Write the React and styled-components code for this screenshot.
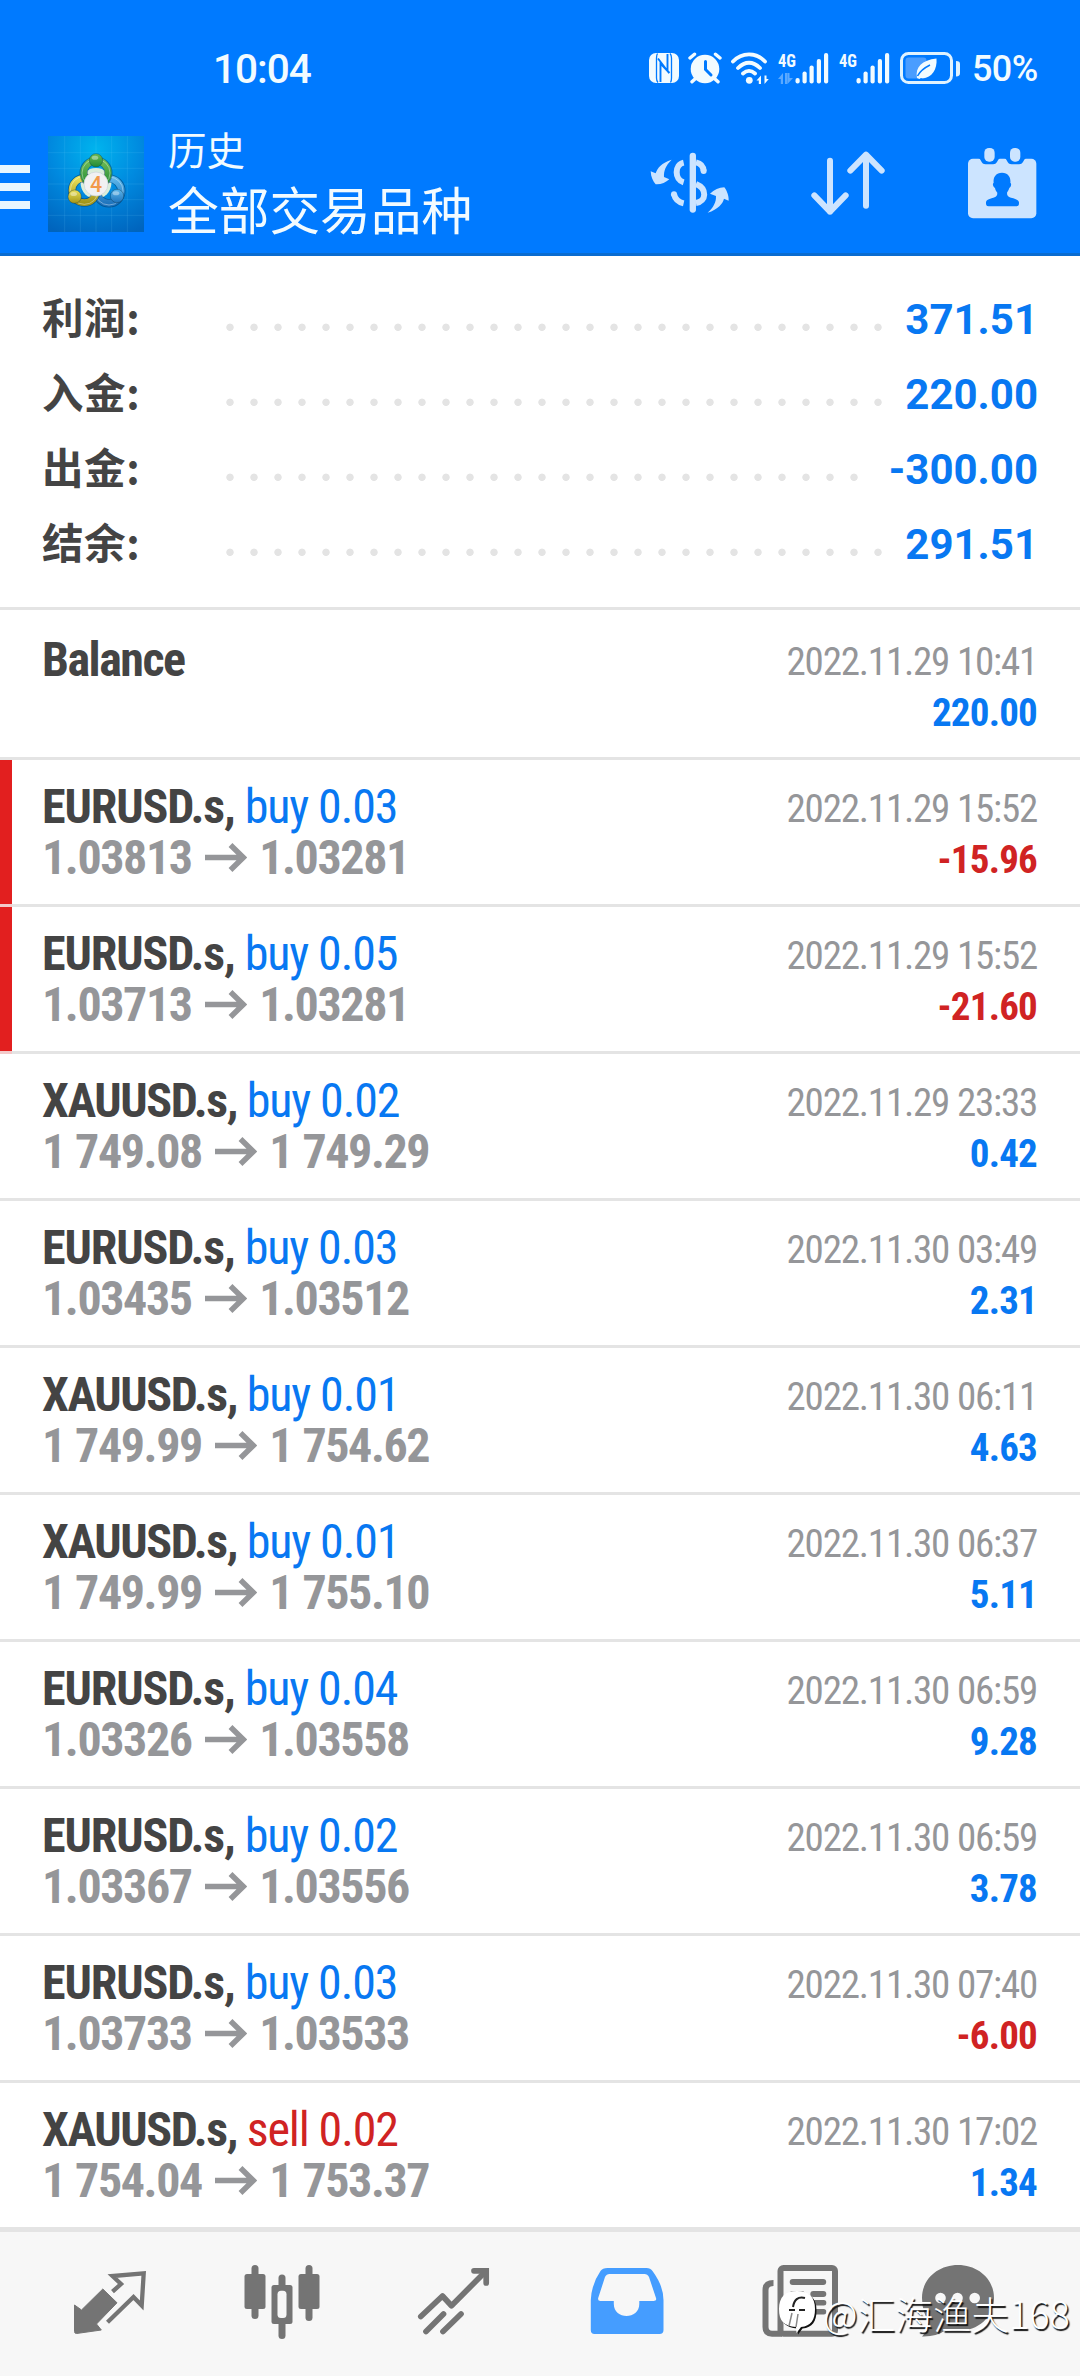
import React from 'react';
import styled, { createGlobalStyle } from 'styled-components';

const BLUE = '#007aff';
const VALUE_BLUE = '#0878f2';
const RED = '#d02323';
const PALE = '#cce4ff';
const GREY = '#747474';
const CJK = '"Noto Sans CJK SC", sans-serif';
const CONDENSED = '"Roboto Condensed", Roboto, sans-serif';

const Global = createGlobalStyle`
  * { box-sizing: border-box; }
  body { margin: 0; background: #fff; }
  svg { display: block; flex: none; }
`;

const Screen = styled.div`
  position: relative;
  width: 1080px;
  height: 2376px;
  display: flex;
  flex-direction: column;
  overflow: hidden;
  background: #fff;
  font-family: Roboto, sans-serif;
`;

/* ---------- header ---------- */

const Header = styled.header`
  height: 256px;
  flex: none;
  background: ${BLUE};
  border-bottom: 3px solid #0a6cd0;
  color: #f2fbff;
`;

const StatusBar = styled.div`
  height: 120px;
  padding: 16px 40px 0 213px;
  display: flex;
  align-items: center;
  justify-content: space-between;
`;

const Clock = styled.span`
  font-size: 40.5px;
  font-weight: 500;
  letter-spacing: -1px;
  line-height: 50px;
  padding-top: 1px;
`;

const StatusIcons = styled.div`
  display: flex;
  align-items: center;
  gap: 9px;
`;

const BatteryText = styled.span`
  margin-left: 2px;
  width: 68px;
  font-size: 36px;
  font-weight: 500;
  line-height: 44px;
  padding-top: 2px;
  letter-spacing: -0.6px;
  white-space: nowrap;
`;

const AppBar = styled.div`
  height: 133px;
  padding-right: 41px;
  display: flex;
  align-items: center;
`;

const MenuButton = styled.div`
  width: 30px;
  height: 44px;
  display: flex;
  flex-direction: column;
  justify-content: space-between;
`;

const MenuBar = styled.span`
  height: 8px;
  background: #e8f6ff;
`;

const LogoBox = styled.div`
  margin: 0 24px 5px 18px;
`;

const Titles = styled.div`
  flex: 1;
  height: 133px;
  font-family: ${CJK};
  white-space: nowrap;
`;

const Caption = styled.div`
  margin-top: 3px;
  font-size: 38.5px;
  line-height: 50px;
`;

const Title = styled.div`
  margin-top: 4.5px;
  font-size: 50.7px;
  line-height: 60px;
`;

const Actions = styled.div`
  padding-bottom: 7px;
  display: flex;
  align-items: center;
  gap: 77px;
`;

/* ---------- summary ---------- */

const Summary = styled.section`
  flex: none;
  padding: 26px 42px 25px;
  border-bottom: 3px solid #e4e4e4;
`;

const SummaryRow = styled.div`
  height: 75px;
  display: flex;
`;

const SummaryLabel = styled.span`
  width: 176px;
  font-family: ${CJK};
  font-weight: 700;
  font-size: 41.5px;
  letter-spacing: 0.6px;
  line-height: 69px;
  color: #444;
`;

const Leader = styled.span`
  flex: 1;
  background-image: radial-gradient(circle at 12px 45.3px, #e4e4e4 3.3px, transparent 4.1px);
  background-size: 24px 75px;
  background-repeat: repeat-x;
`;

const SummaryValue = styled.span`
  margin-left: 17px;
  font-weight: 700;
  font-size: 42px;
  line-height: 75px;
  color: ${VALUE_BLUE};
`;

/* ---------- deals ---------- */

const DealRow = styled.article`
  flex: none;
  display: flex;
  justify-content: space-between;
  height: ${p => (p.$first ? 150 : 147)}px;
  padding: ${p => (p.$first ? 24 : 21)}px 43px 0 42px;
  background:
    ${p => p.$marked && `
      linear-gradient(#f3caca, #f3caca) left bottom / 12px 3px no-repeat,
      linear-gradient(#e21f1f, #e21f1f) left top / 12px 144px no-repeat,
    `}
    linear-gradient(#e4e4e4, #e4e4e4) left bottom / 100% 3px no-repeat;
  font-family: ${CONDENSED};
  white-space: pre;
`;

const DealInfo = styled.div`
  font-size: 48px;
  line-height: 51px;
`;

const DealHead = styled.div`
  height: 51px;
`;

const tracking = { Balance: -1.5, 'EURUSD.s': -1.1, 'XAUUSD.s': -1.4 };

const Symbol = styled.span`
  font-weight: 700;
  color: #444;
  letter-spacing: ${p => p.$tracking}px;
`;

const Side = styled.span`
  color: ${p => (p.$sell ? RED : VALUE_BLUE)};
  letter-spacing: -1.1px;
`;

const Prices = styled.div`
  display: flex;
  font-weight: 700;
  letter-spacing: -1.4px;
  word-spacing: 0.5px;
  color: #959699;
`;

const ArrowBox = styled.span`
  padding: 11px 12px 0 13px;
`;

const DealMeta = styled.div`
  padding-top: 3px;
  text-align: right;
  font-size: 39px;
  line-height: 51px;
`;

const DealDate = styled.div`
  color: #959699;
  letter-spacing: -1.2px;
`;

const DealAmount = styled.div`
  font-weight: 700;
  letter-spacing: -0.8px;
  color: ${p => (p.$negative ? RED : VALUE_BLUE)};
`;

/* ---------- bottom navigation ---------- */

const Nav = styled.nav`
  flex: 1;
  display: flex;
  padding: 28px 0 0 23px;
  background: #f7f7f7;
  border-top: 2px solid #e4e4e4;
`;

const NavItem = styled.div`
  width: ${p => (p.$last ? 145 : 172.5)}px;
  display: flex;
  justify-content: center;
`;

const Watermark = styled.div`
  position: absolute;
  left: 779px;
  top: 2289px;
  display: flex;
  align-items: center;
  color: #fff;
  font-family: ${CJK};
  font-weight: 300;
  font-size: 37.9px;
  line-height: 48px;
  text-shadow: 1.5px 1.5px 1px #111;
  white-space: nowrap;
`;

const WatermarkText = styled.span`
  margin-left: 6px;
`;

/* ---------- drawings ---------- */

const Nfc = () => (
  <svg width="30" height="30" viewBox="0 0 30 30">
    <rect x="0" y="0" width="30" height="30" rx="7" fill="#f2fbff" />
    <path d="M8.500 0.500Q7.500 2 7.500 5V25Q7.500 28 9 29.500" fill="none" stroke={BLUE} strokeWidth="1.300" />
    <path d="M21.500 29.500Q22.500 28 22.500 25V5Q22.500 2 21 0.500" fill="none" stroke={BLUE} strokeWidth="1.300" />
    <path d="M11.500 29V10.500L20.500 20M18.500 1V18L9 5.500" fill="none" stroke={BLUE} strokeWidth="1.900" />
  </svg>
);

const Alarm = () => (
  <svg width="34" height="32" viewBox="0 0 34 32">
    <g stroke="#f2fbff" strokeWidth="3.4" strokeLinecap="round">
      <path d="M2 6L6.5 2.2M32 6L27.5 2.2M7 27L4 29.8M27 27L30 29.8" />
    </g>
    <circle cx="17" cy="17" r="14.3" fill="#f2fbff" />
    <path d="M17.5 9.5V17.5L23 23" fill="none" stroke={BLUE} strokeWidth="3" strokeLinecap="round" />
  </svg>
);

const Wifi = () => (
  <svg width="38" height="32" viewBox="0 0 38 32" fill="none" stroke="#f2fbff" strokeWidth="3.8" strokeLinecap="round">
    <path d="M2 9.5C11 0 25 0 34 9.5M7 16C14 9 22 9 29 16M12 21.5C16 18 20 18 24 21.5" />
    <circle cx="18.3" cy="28.3" r="3.4" fill="#f2fbff" stroke="none" />
    <path d="M25.500 28.500L30 23.500V32H27.800V28.500ZM37.800 27L33.500 32V23.500H35.500V27Z" fill="#f2fbff" stroke="none" />
  </svg>
);

const Signal = ({ data }) => (
  <svg width="52" height="32" viewBox="0 0 52 32" fill="#f2fbff" overflow="visible">
    <text x="0" y="15" fontFamily="Roboto Condensed, sans-serif" fontWeight="700" fontSize="19" textLength="18" lengthAdjust="spacingAndGlyphs">4G</text>
    <g>
      <rect x="17.5" y="26" width="4.2" height="5.5" rx="2" />
      <rect x="24.5" y="19.5" width="4.2" height="12" rx="2" />
      <rect x="31.5" y="13.5" width="4.2" height="18" rx="2" />
      <rect x="38.8" y="7" width="4.2" height="24.5" rx="2" />
      <rect x="46" y="1" width="4.2" height="30.5" rx="2" />
    </g>
    {data && <path d="M0 27L5 21V32H2.8V27ZM7 21V32H9.2V21ZM9.5 32V21H11.5V26H15Z" fill="#5aa9ff" />}
  </svg>
);

const Battery = () => (
  <svg width="61" height="33" viewBox="0 0 61 33">
    <rect x="1.5" y="1.5" width="50" height="29" rx="7" fill="none" stroke="#e0f3ff" strokeWidth="3" />
    <rect x="5.5" y="5.5" width="21" height="21" rx="3" fill="#4a9dff" />
    <path d="M56 9C59 9 60 10 60 12V21C60 23 59 24.500 56 24.500Z" fill="#e0f3ff" />
    <path d="M17 26C15 15 22 8 36.500 6.500C37.500 18 31 27.500 20.500 26L19.500 27Z" fill="#f2fbff" />
    <path d="M17.500 24C20 19 24 16 30 13" fill="none" stroke={BLUE} strokeWidth="1.500" />
  </svg>
);

const Person = ({ x, y, hx, hy, id }) => (
  <g fill="none">
    <circle cx={x} cy={y} r="37" stroke="rgba(0,40,80,.45)" strokeWidth="25" />
    <circle cx={x} cy={y} r="37" stroke={`url(#${id})`} strokeWidth="20" />
    <circle cx={x} cy={y} r="42" stroke="rgba(255,255,255,.45)" strokeWidth="2.5" />
    <circle cx={hx} cy={hy} r="20" fill={`url(#${id})`} stroke="rgba(0,40,60,.4)" strokeWidth="2.5" />
    <ellipse cx={hx - 3} cy={hy - 8} rx="10" ry="6" fill="rgba(255,255,255,.4)" />
  </g>
);

const AppLogo = () => (
  <svg width="96" height="96" viewBox="24 18 288 288">
    <defs>
      <radialGradient id="bg" cx="50%" cy="14%" r="95%">
        <stop offset="0" stopColor="#00b4ee" />
        <stop offset=".5" stopColor="#0089df" />
        <stop offset="1" stopColor="#0064bd" />
      </radialGradient>
      <linearGradient id="gr" x1="0" y1="0" x2="0" y2="1">
        <stop offset="0" stopColor="#6fbb55" />
        <stop offset="1" stopColor="#1f8a35" />
      </linearGradient>
      <linearGradient id="ye" x1="0" y1="0" x2="0" y2="1">
        <stop offset="0" stopColor="#e9e058" />
        <stop offset="1" stopColor="#a39518" />
      </linearGradient>
      <linearGradient id="bl" x1="0" y1="0" x2="0" y2="1">
        <stop offset="0" stopColor="#5cb6ea" />
        <stop offset="1" stopColor="#1f74bd" />
      </linearGradient>
    </defs>
    <rect x="24" y="18" width="288" height="288" fill="url(#bg)" />
    <path
      d="M74 18V306M121 18V306M168 18V306M215 18V306M262 18V306M24 68H312M24 115H312M24 162H312M24 209H312M24 256H312"
      stroke="rgba(120,215,255,.2)" strokeWidth="2"
    />
    <circle cx="168" cy="160" r="46" fill="#dbeeda" />
    <Person id="bl" x={207} y={183} hx={231} hy={198} />
    <Person id="ye" x={133} y={181} hx={104} hy={200} />
    <Person id="gr" x={168} y={129} hx={168} hy={91} />
    <circle cx="168" cy="162" r="36" fill="#f1f1f2" stroke="#c9d2d6" strokeWidth="2" />
    <text x="168" y="185" textAnchor="middle" fontFamily="Roboto, sans-serif" fontWeight="500" fontSize="64" fill="#f2994a">4</text>
  </svg>
);

const Exchange = () => (
  <svg width="83.3" height="68" viewBox="85 55 250 204" fill={PALE}>
    <rect x="210" y="66" width="19" height="180" rx="9.500" />
    <g fill="none" stroke={PALE} strokeWidth="18">
      <path d="M192 96C164 102 164 147 192 155" />
      <path d="M192 218C174 214 166 205 163 190" />
      <path d="M229 95C243 98 251 106 252 121" />
      <path d="M229 160C263 174 261 212 229 217" />
    </g>
    <circle cx="163" cy="191" r="9" />
    <circle cx="252" cy="121" r="9" />
    <path d="M156 87C126 96 113 112 108 128L93 122C94 140 100 152 108 161C124 162 138 156 149 146L133 139C132 120 138 105 156 87Z" />
    <path d="M264 246C296 236 310 218 313 204L327 210C328 196 322 180 314 170C298 170 284 178 271 189L289 196C290 214 282 230 264 246Z" />
  </svg>
);

const SortArrows = () => (
  <svg width="80" height="68" viewBox="558 58 240 204" fill="none" stroke={PALE} strokeWidth="18" strokeLinecap="round" strokeLinejoin="round">
    <path d="M624 93V246M577 197L624 246L671 197M732 228V75M685 123L732 75L779 123" />
  </svg>
);

const Calendar = () => (
  <svg width="74" height="74" viewBox="1034 47 222 222" fill={PALE}>
    <rect x="1043" y="85" width="205" height="179" rx="15" />
    <path d="M1074 83H1140C1130 86 1133 102 1118 102H1096C1081 102 1084 86 1074 83ZM1152 83H1218C1208 86 1211 102 1196 102H1174C1159 102 1162 86 1152 83Z" fill={BLUE} />
    <rect x="1092" y="53" width="31" height="41" rx="14" />
    <rect x="1169" y="53" width="31" height="41" rx="14" />
    <path d="M1145 127C1165 127 1172 143 1170 157C1174 159 1173 169 1167 173C1165 180 1162 184 1160 187C1160 196 1163 199 1172 202C1188 206 1197 209 1196 219C1196 225 1194 228 1188 228H1105C1099 228 1097 225 1097 219C1096 209 1104 206 1119 202C1128 199 1131 196 1131 187C1128 184 1125 180 1124 173C1117 169 1116 159 1120 157C1118 143 1125 127 1145 127Z" fill={BLUE} />
  </svg>
);

const PriceArrow = () => (
  <svg width="42.500" height="29" viewBox="0 0 42.5 29" fill="none" stroke="#959699" strokeWidth="5.500">
    <path d="M0 14.500H38M25.500 2L38.300 14.500L25.500 27" />
  </svg>
);

const NavSvg = ({ x, children }) => (
  <svg width="80" height="80" viewBox={`${x} 2260 80 80`}>{children}</svg>
);

const Quotes = () => (
  <NavSvg x={69}>
    <path d="M74.500 2305L81.500 2310L102.800 2289L117 2302.800L96.500 2324L101.300 2330L76.500 2333.500Q74.500 2333.500 74.500 2331.500Z" fill={GREY} stroke={GREY} strokeWidth="1" strokeLinejoin="round" />
    <path d="M112.500 2291.700L121 2284L112.500 2276L143.700 2273.300L141.700 2305.500L133.500 2297L107.500 2322.300" fill="none" stroke={GREY} strokeWidth="4.300" />
  </NavSvg>
);

const Candles = () => (
  <NavSvg x={241.5}>
    <g fill={GREY}>
      <rect x="244" y="2274" width="21" height="35" rx="2.500" />
      <rect x="251" y="2265" width="7" height="54" rx="3.500" />
      <rect x="298" y="2274" width="21" height="35" rx="2.500" />
      <rect x="305" y="2265" width="7" height="56" rx="3.500" />
      <rect x="278" y="2274.500" width="7" height="64.500" rx="3.500" />
      <rect x="271" y="2285" width="21" height="39" rx="2.500" />
    </g>
    <rect x="277" y="2290.700" width="9" height="27.300" rx="3.500" fill="#f7f7f7" />
  </NavSvg>
);

const Trade = () => (
  <NavSvg x={414}>
    <g fill="none" stroke={GREY} strokeWidth="5.700" strokeLinecap="round">
      <path d="M420.800 2316.500L442.500 2296L451.500 2305.700L486 2271" strokeLinejoin="round" />
      <path d="M474 2270.800H486.200V2283" />
      <path d="M426 2331.500L443.500 2314M443 2331.500L461 2314" />
    </g>
  </NavSvg>
);

const History = () => (
  <NavSvg x={586.5}>
    <path
      fillRule="evenodd"
      fill="#459dff"
      d="M607 2268H646Q650 2268 652 2271Q663 2286 663 2300V2330Q663 2334 659 2334H594Q590.300 2334 590.300 2330V2300Q591 2284 600 2271Q602 2268 607 2268ZM609 2274Q606 2274 604.500 2277L597.700 2298Q597 2301 600 2301H613.300V2304C613.300 2320 638.800 2320 638.800 2304V2301H653Q656.500 2301 655.500 2298L648.500 2277Q647 2274 644 2274Z"
    />
  </NavSvg>
);

const News = () => (
  <NavSvg x={759}>
    <g fill="none" stroke={GREY} strokeWidth="6">
      <rect x="780.500" y="2268" width="54.500" height="65.700" rx="3" />
      <path d="M773.500 2283Q765.500 2283 765.500 2290V2327Q765.500 2333.700 772 2333.700H782" />
    </g>
    <g fill={GREY}>
      <rect x="789.700" y="2279" width="36.500" height="6" rx="3" />
      <rect x="789.700" y="2291" width="15" height="6" rx="3" />
      <rect x="810.300" y="2291" width="16" height="6" rx="3" />
      <rect x="789.700" y="2300" width="15" height="5.500" rx="2.500" />
      <rect x="810.300" y="2300" width="16" height="5.500" rx="2.500" />
      <rect x="789.700" y="2309" width="36.500" height="5.500" rx="2.500" />
    </g>
  </NavSvg>
);

const Chat = () => (
  <NavSvg x={918}>
    <path d="M958 2265C978 2265 994 2279 994 2298C994 2317 978 2331 958 2331Q951 2331 946 2330Q936 2337 922 2336.500Q929 2330 929 2322Q922 2312 922 2298C922 2279 938 2265 958 2265Z" fill={GREY} />
    <g fill="#f7f7f7">
      <circle cx="940.500" cy="2298" r="5.300" />
      <circle cx="957.500" cy="2298" r="5.300" />
      <circle cx="974.700" cy="2298" r="5.300" />
    </g>
  </NavSvg>
);

const BadgeShape = 'M18 1C30 1 36 7 36 19C36 30 32 36 22 37L17.500 43L17 37C5 36 0 31 0 19C0 7 6 1 18 1Z';

const WatermarkLogo = () => (
  <svg width="38" height="46" viewBox="0 0 38 46">
    <path d={BadgeShape} transform="translate(1.500 1.500)" fill="#111" />
    <path d={BadgeShape} fill="#fff" />
    <path d="M26 8C19 6 15 10 14 17M10 20H16M20 20H26" fill="none" stroke="#222" strokeWidth="2" />
    <path d="M13 23L10 36M19 24L17 37" fill="none" stroke="#888" strokeWidth="1.500" />
  </svg>
);

/* ---------- data ---------- */

const totals = [
  ['利润:', '371.51'],
  ['入金:', '220.00'],
  ['出金:', '-300.00'],
  ['结余:', '291.51'],
];

const deals = [
  { symbol: 'Balance', date: '2022.11.29 10:41', amount: '220.00' },
  { symbol: 'EURUSD.s', side: 'buy 0.03', from: '1.03813', to: '1.03281', date: '2022.11.29 15:52', amount: '-15.96', marked: true },
  { symbol: 'EURUSD.s', side: 'buy 0.05', from: '1.03713', to: '1.03281', date: '2022.11.29 15:52', amount: '-21.60', marked: true },
  { symbol: 'XAUUSD.s', side: 'buy 0.02', from: '1 749.08', to: '1 749.29', date: '2022.11.29 23:33', amount: '0.42' },
  { symbol: 'EURUSD.s', side: 'buy 0.03', from: '1.03435', to: '1.03512', date: '2022.11.30 03:49', amount: '2.31' },
  { symbol: 'XAUUSD.s', side: 'buy 0.01', from: '1 749.99', to: '1 754.62', date: '2022.11.30 06:11', amount: '4.63' },
  { symbol: 'XAUUSD.s', side: 'buy 0.01', from: '1 749.99', to: '1 755.10', date: '2022.11.30 06:37', amount: '5.11' },
  { symbol: 'EURUSD.s', side: 'buy 0.04', from: '1.03326', to: '1.03558', date: '2022.11.30 06:59', amount: '9.28' },
  { symbol: 'EURUSD.s', side: 'buy 0.02', from: '1.03367', to: '1.03556', date: '2022.11.30 06:59', amount: '3.78' },
  { symbol: 'EURUSD.s', side: 'buy 0.03', from: '1.03733', to: '1.03533', date: '2022.11.30 07:40', amount: '-6.00' },
  { symbol: 'XAUUSD.s', side: 'sell 0.02', from: '1 754.04', to: '1 753.37', date: '2022.11.30 17:02', amount: '1.34' },
];

const navIcons = [Quotes, Candles, Trade, History, News, Chat];

function Deal({ deal, first }) {
  return (
    <DealRow $first={first} $marked={deal.marked}>
      <DealInfo>
        <DealHead>
          <Symbol $tracking={tracking[deal.symbol]}>{deal.side ? `${deal.symbol}, ` : deal.symbol}</Symbol>
          {deal.side && <Side $sell={deal.side.startsWith('sell')}>{deal.side}</Side>}
        </DealHead>
        {deal.from && (
          <Prices>
            <span>{deal.from}</span>
            <ArrowBox><PriceArrow /></ArrowBox>
            <span>{deal.to}</span>
          </Prices>
        )}
      </DealInfo>
      <DealMeta>
        <DealDate>{deal.date}</DealDate>
        <DealAmount $negative={deal.amount.startsWith('-')}>{deal.amount}</DealAmount>
      </DealMeta>
    </DealRow>
  );
}

export default function App() {
  return (
    <Screen>
      <Global />
      <Header>
        <StatusBar>
          <Clock>10:04</Clock>
          <StatusIcons>
            <Nfc />
            <Alarm />
            <Wifi />
            <Signal data />
            <Signal />
            <Battery />
            <BatteryText>50%</BatteryText>
          </StatusIcons>
        </StatusBar>
        <AppBar>
          <MenuButton><MenuBar /><MenuBar /><MenuBar /></MenuButton>
          <LogoBox><AppLogo /></LogoBox>
          <Titles>
            <Caption>历史</Caption>
            <Title>全部交易品种</Title>
          </Titles>
          <Actions>
            <Exchange />
            <SortArrows />
            <Calendar />
          </Actions>
        </AppBar>
      </Header>
      <Summary>
        {totals.map(([label, value]) => (
          <SummaryRow key={label}>
            <SummaryLabel>{label}</SummaryLabel>
            <Leader />
            <SummaryValue>{value}</SummaryValue>
          </SummaryRow>
        ))}
      </Summary>
      {deals.map((deal, i) => <Deal key={i} deal={deal} first={i === 0} />)}
      <Nav>
        {navIcons.map((Icon, i) => <NavItem key={i} $last={i === 5}><Icon /></NavItem>)}
      </Nav>
      <Watermark>
        <WatermarkLogo />
        <WatermarkText>@汇海渔夫168</WatermarkText>
      </Watermark>
    </Screen>
  );
}
